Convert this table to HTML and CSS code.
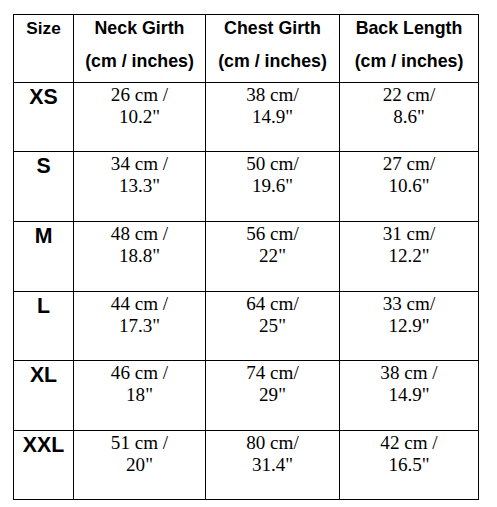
FILE: index.html
```html
<!DOCTYPE html>
<html>
<head>
<meta charset="utf-8">
<link rel="stylesheet" href="styles.css">
</head>
<body>
<div class="page">
  <div class="chart">
    <div class="cell head"><div class="hl size-h">Size</div></div>
    <div class="cell head"><div class="hl">Neck Girth</div><div class="hl second">(cm / inches)</div></div>
    <div class="cell head"><div class="hl">Chest Girth</div><div class="hl second">(cm / inches)</div></div>
    <div class="cell head"><div class="hl">Back Length</div><div class="hl second">(cm / inches)</div></div>

    <div class="cell size">XS</div>
    <div class="cell val">26 cm /<br>10.2"</div>
    <div class="cell val">38 cm/<br>14.9"</div>
    <div class="cell val">22 cm/<br>8.6"</div>

    <div class="cell size">S</div>
    <div class="cell val">34 cm /<br>13.3"</div>
    <div class="cell val">50 cm/<br>19.6"</div>
    <div class="cell val">27 cm/<br>10.6"</div>

    <div class="cell size">M</div>
    <div class="cell val">48 cm /<br>18.8"</div>
    <div class="cell val">56 cm/<br>22"</div>
    <div class="cell val">31 cm/<br>12.2"</div>

    <div class="cell size">L</div>
    <div class="cell val">44 cm /<br>17.3"</div>
    <div class="cell val">64 cm/<br>25"</div>
    <div class="cell val">33 cm/<br>12.9"</div>

    <div class="cell size">XL</div>
    <div class="cell val">46 cm /<br>18"</div>
    <div class="cell val">74 cm/<br>29"</div>
    <div class="cell val">38 cm /<br>14.9"</div>

    <div class="cell size">XXL</div>
    <div class="cell val">51 cm /<br>20"</div>
    <div class="cell val">80 cm/<br>31.4"</div>
    <div class="cell val">42 cm /<br>16.5"</div>
  </div>
</div>
</body>
</html>
```

FILE: styles.css
```css
html, body {
  margin: 0;
  padding: 0;
  background: #fff;
}

.page {
  padding: 14px 0 0 13px;
}

.chart {
  display: grid;
  grid-template-columns: 59px 131px 133px 138px;
  grid-template-rows: 67px 68px 69px 69px 68px 69px 68px;
  gap: 1px;
  padding: 1px;
  background: #000;
  width: max-content;
}

.cell {
  background: #fff;
  text-align: center;
  color: #000;
}

.head {
  font-family: "Liberation Sans", Arial, sans-serif;
  font-weight: bold;
  font-size: 17.8px;
  line-height: 20px;
  padding-top: 3px;
}

.hl.second {
  margin-top: 12.5px;
}

.size-h {
  font-size: 17.2px;
}

.size {
  font-family: "Liberation Sans", Arial, sans-serif;
  font-weight: bold;
  font-size: 21.3px;
  line-height: 24px;
  padding-top: 2px;
}

.val {
  font-family: "Liberation Serif", "Times New Roman", serif;
  font-size: 19.1px;
  line-height: 22px;
  padding-top: 1px;
}
```
